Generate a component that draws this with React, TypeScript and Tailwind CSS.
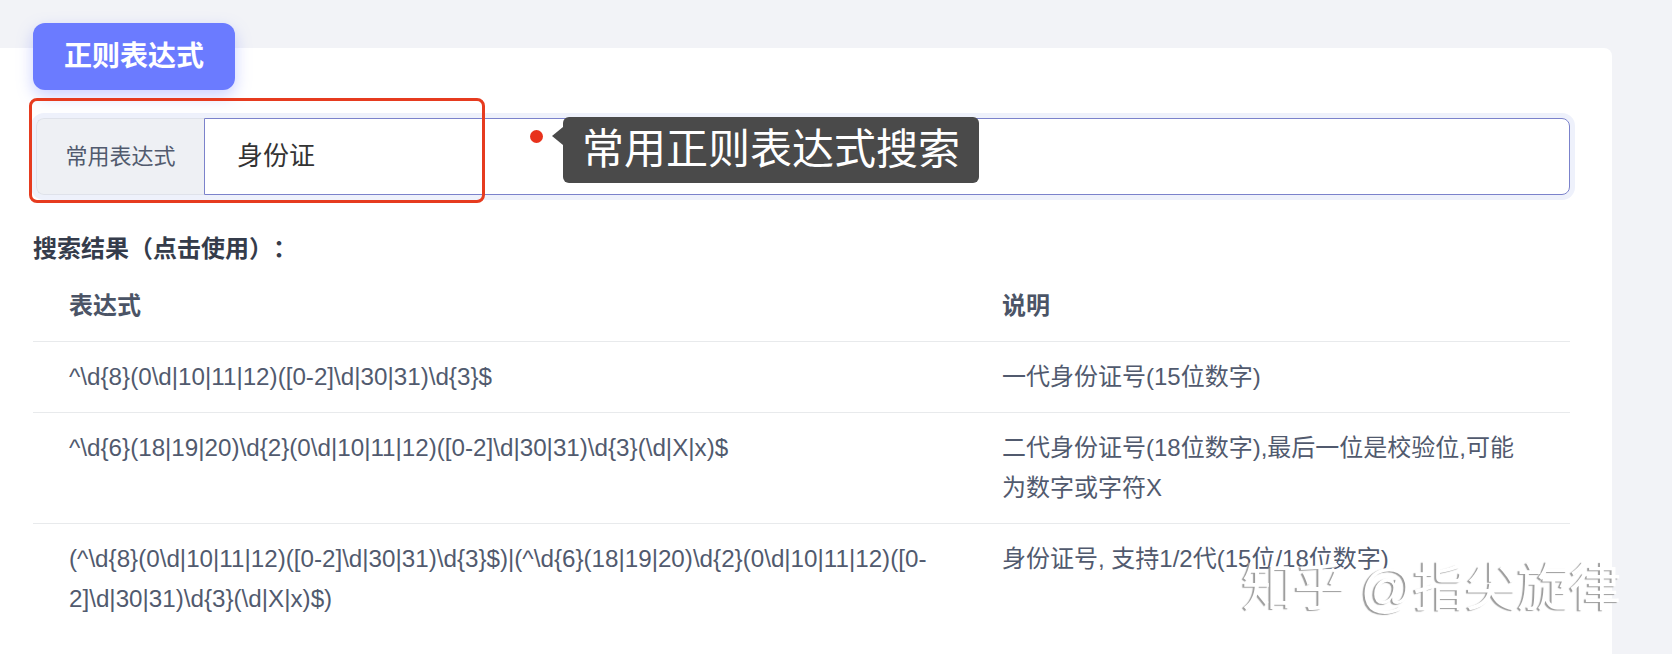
const rows = [
  {
    expr: "^\\d{8}(0\\d|10|11|12)([0-2]\\d|30|31)\\d{3}$",
    desc: "一代身份证号(15位数字)",
  },
  {
    expr: "^\\d{6}(18|19|20)\\d{2}(0\\d|10|11|12)([0-2]\\d|30|31)\\d{3}(\\d|X|x)$",
    desc: "二代身份证号(18位数字),最后一位是校验位,可能为数字或字符X",
  },
  {
    expr: "(^\\d{8}(0\\d|10|11|12)([0-2]\\d|30|31)\\d{3}$)|(^\\d{6}(18|19|20)\\d{2}(0\\d|10|11|12)([0-2]\\d|30|31)\\d{3}(\\d|X|x)$)",
    desc: "身份证号, 支持1/2代(15位/18位数字)",
  },
]

export default function App() {
  return (
    <div className="relative h-[654px] overflow-hidden bg-[#f2f3f7] font-['Liberation_Sans','Noto_Sans_CJK_SC',sans-serif]">
      <div className="mt-[48px] h-[606px] w-[1612px] rounded-tr-lg bg-white px-[33px]">
        {/* tab badge */}
        <div className="-mt-[25px] inline-flex h-[67px] w-[202px] items-center justify-center rounded-[12px] bg-[#6b7bff] text-[28px] font-bold text-white shadow-[0_6px_16px_rgba(107,123,255,0.35)]">
          正则表达式
        </div>

        {/* search input */}
        <div className="ml-[3px] mt-[28px] flex h-[77px] w-[1534px] rounded-[8px] shadow-[0_0_0_5px_#eef1fb]">
          <div className="flex w-[168px] items-center justify-center rounded-l-[8px] border border-r-0 border-[#dfe2ea] bg-[#eef0f4] text-[22px] text-[#515a6e]">
            常用表达式
          </div>
          <div className="flex flex-1 items-center rounded-r-[8px] border-[1.5px] border-[#7b82cb] bg-white pl-[32px] text-[26px] text-[#333]">
            身份证
          </div>
        </div>

        <div className="mt-[38px] text-[24px] font-bold leading-[32px] text-[#353c4b] [text-spacing-trim:space-all]">
          搜索结果（点击使用）：
        </div>

        {/* result table */}
        <div className="mt-[6px] w-[1537px]">
          <div className="grid grid-cols-[933px_604px] border-b border-[#e8eaec] text-[24px] font-bold leading-[40px] text-[#4b5466]">
            <div className="py-[15px] pl-[36px]">表达式</div>
            <div className="py-[15px] pl-[36px]">说明</div>
          </div>
          {rows.map((r, i) => (
            <div
              key={i}
              className={
                i < rows.length - 1
                  ? "grid grid-cols-[933px_604px] border-b border-[#e8eaec] leading-[40px] text-[#515a6e]"
                  : "grid grid-cols-[933px_604px] leading-[40px] text-[#515a6e]"
              }
            >
              <div className="break-all py-[15px] pl-[36px] pr-[29px] text-[24.2px]">{r.expr}</div>
              <div className="py-[15px] pl-[36px] pr-[38px] text-[24px]">{r.desc}</div>
            </div>
          ))}
        </div>
      </div>

      {/* annotation overlay */}
      <div className="absolute left-[29px] top-[98px] h-[105px] w-[456px] rounded-[8px] border-[3px] border-[#e63b1f]" />
      <div className="absolute left-[530px] top-[130px] h-[13px] w-[13px] rounded-full bg-[#e8321c]" />
      <div className="absolute left-[563px] top-[117px] flex h-[66px] items-center whitespace-nowrap rounded-[6px] bg-[#4a4a4a] px-[19px] text-[42px] leading-none text-white">
        <span className="absolute -left-[11px] top-[10px] h-0 w-0 border-y-[9px] border-r-[11px] border-y-transparent border-r-[#4a4a4a]" />
        常用正则表达式搜索
      </div>

      {/* watermark */}
      <div className="absolute left-[1242px] top-[562px] whitespace-nowrap text-[52px] leading-none text-white [text-shadow:-2px_1px_1px_#9c9c9c]">
        知乎 @指尖旋律
      </div>
    </div>
  )
}
